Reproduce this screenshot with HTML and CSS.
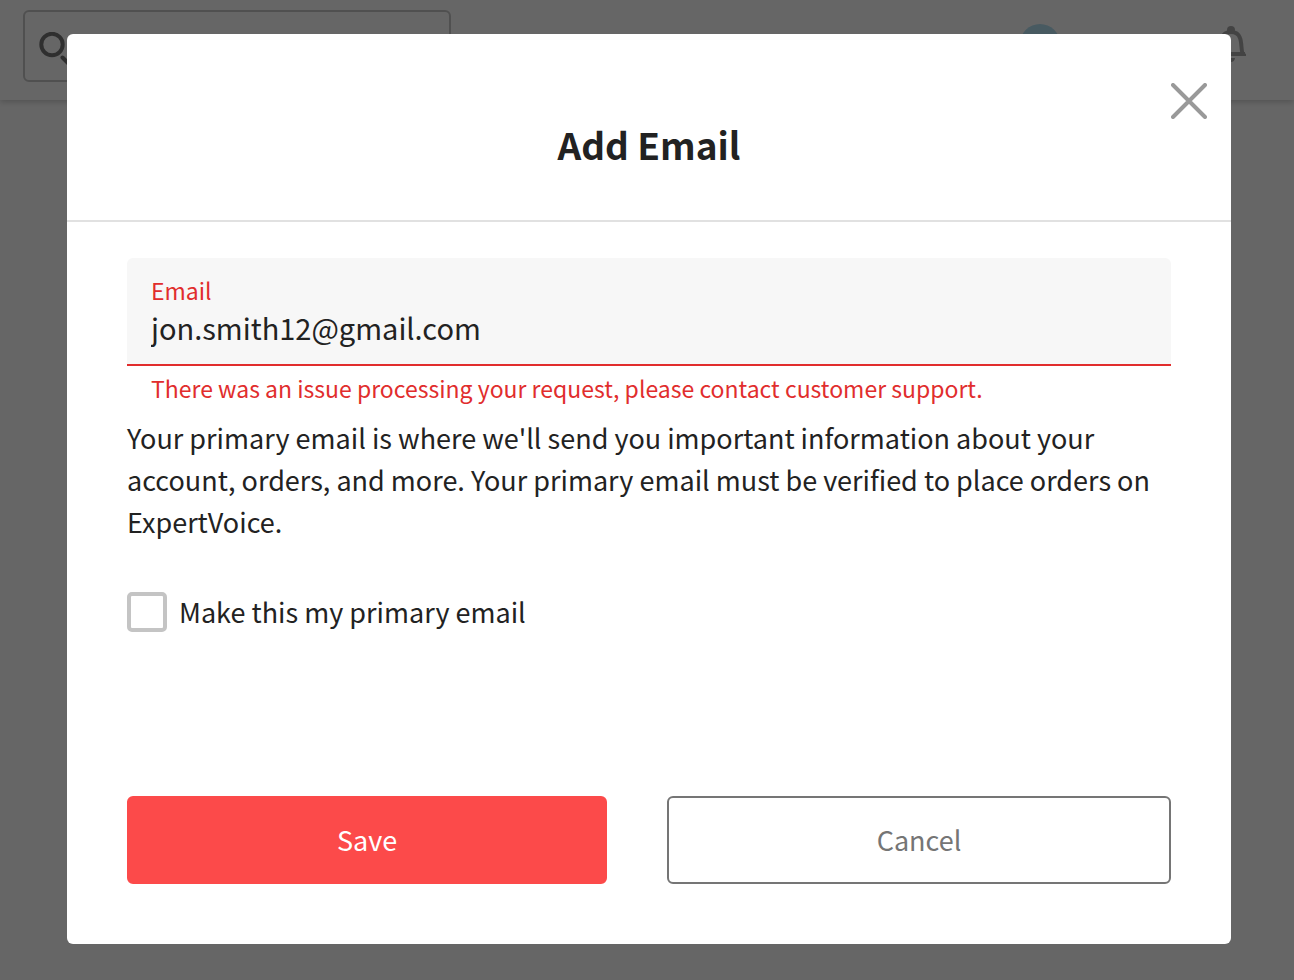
FILE: index.html
```
<!DOCTYPE html>
<html lang="en">
<head>
  <meta charset="UTF-8" />
  <meta name="viewport" content="width=device-width, initial-scale=1" />
  <title>Add Email</title>
  <link rel="stylesheet" href="styles.css">
</head>
<body>

  <!-- Page behind the modal -->
  <header class="site-header">
    <div class="search">
      <svg class="search-icon" viewBox="0 0 36 36" aria-hidden="true">
        <circle cx="13" cy="12.500" r="10.700" />
        <path d="M23.500 25.500l8 8" />
      </svg>
      <input type="search" aria-label="Search" />
    </div>
    <div class="header-actions">
      <span class="avatar"></span>
      <svg class="bell-icon" viewBox="0 0 30 38" aria-hidden="true">
        <circle class="fill" cx="15" cy="4" r="4" />
        <path d="M3 28C5 26 4 17 6 12Q8 6 15 6T24 12C26 17 25 26 27 28Z" />
        <path class="fill" d="M1 26h28v4H1zM11 32h8q-.5 4-4 4t-4-4z" />
      </svg>
    </div>
  </header>

  <div class="overlay">
    <form class="modal" role="dialog" aria-labelledby="modalTitle">
      <div class="modal-header">
        <h1 id="modalTitle">Add Email</h1>
        <button type="button" class="close" aria-label="Close">
          <svg viewBox="0 0 36 36" aria-hidden="true">
            <path d="M2 2l32 32M34 2L2 34" />
          </svg>
        </button>
      </div>

      <div class="modal-body">
        <div class="field">
          <label for="email">Email</label>
          <input type="text" id="email" value="jon.smith12@gmail.com" aria-describedby="emailError" />
        </div>
        <p class="error" id="emailError">There was an issue processing your request, please contact customer support.</p>

        <p class="info">Your primary email is where we'll send you important information about your account, orders, and more. Your primary email must be verified to place orders on ExpertVoice.</p>

        <div class="checkbox">
          <input type="checkbox" id="primary" />
          <label for="primary">Make this my primary email</label>
        </div>

        <div class="actions">
          <button type="submit" class="btn btn-primary">Save</button>
          <button type="button" class="btn btn-outline">Cancel</button>
        </div>
      </div>
    </form>
  </div>

</body>
</html>
```
FILE: styles.css
```
* {
  box-sizing: border-box;
}

body {
  margin: 0;
  min-height: 100vh;
  background: #fff;
  color: #222;
  font-family: "Noto Sans CJK SC", "Open Sans", sans-serif;
  font-size: 27px;
  line-height: 42px;
}

h1, p {
  margin: 0;
}

input, button {
  font: inherit;
  color: inherit;
}

/* Page header */
.site-header {
  display: flex;
  justify-content: space-between;
  height: 100px;
  padding: 10px 48px 10px 23px;
  background: #fff;
  box-shadow: 0 2px 6px rgba(0, 0, 0, 0.2);
}

.search {
  display: flex;
  align-items: flex-start;
  width: 428px;
  height: 72px;
  padding: 20px 14px;
  border: 2px solid #c8c8c8;
  border-radius: 6px;
}

.search input {
  flex: 1;
  min-width: 0;
  height: 28px;
  border: 0;
  background: none;
}

.search-icon {
  width: 36px;
  height: 36px;
  fill: none;
  stroke: #777;
  stroke-width: 4;
  stroke-linecap: round;
}

.header-actions {
  display: flex;
  gap: 156px;
  padding-top: 14px;
}

.avatar {
  width: 40px;
  height: 40px;
  border-radius: 50%;
  background: #b4e0f2;
}

.bell-icon {
  width: 30px;
  height: 38px;
  margin-top: 2px;
  fill: none;
  stroke: #a8a8a8;
  stroke-width: 4;
}

.bell-icon .fill {
  fill: #a8a8a8;
  stroke: none;
}

/* Modal */
.overlay {
  position: fixed;
  inset: 0;
  overflow: auto;
  padding: 34px 63px 36px 67px;
  background: rgba(0, 0, 0, 0.6);
}

.modal {
  position: relative;
  background: #fff;
  border-radius: 6px;
}

.modal-header {
  padding: 82px 60px 48px;
  border-bottom: 2px solid #e1e1e1;
  text-align: center;
}

.modal-header h1 {
  font-size: 37px;
  font-weight: bold;
  line-height: 56px;
}

.close {
  position: absolute;
  top: 49px;
  right: 24px;
  width: 36px;
  height: 36px;
  padding: 0;
  border: 0;
  background: none;
  cursor: pointer;
}

.close svg {
  display: block;
  fill: none;
  stroke: #999;
  stroke-width: 4;
  stroke-linecap: round;
}

.modal-body {
  padding: 36px 60px 60px;
}

.field {
  padding: 15px 24px 17px;
  background: #f7f7f7;
  border-bottom: 2px solid #e12d2d;
  border-radius: 6px 6px 0 0;
}

.field label {
  display: block;
  color: #e12d2d;
  font-size: 23px;
  line-height: 34px;
}

.field input {
  display: block;
  width: 100%;
  height: 40px;
  padding: 0;
  border: 0;
  outline: 0;
  background: none;
  font-size: 29px;
}

.error {
  padding: 6px 24px 13px;
  color: #e12d2d;
  font-size: 23px;
  line-height: 32px;
}

.checkbox {
  display: flex;
  align-items: center;
  gap: 12px;
  margin-top: 48px;
}

.checkbox input {
  appearance: none;
  width: 40px;
  height: 40px;
  margin: 0;
  border: 4px solid #c4c4c4;
  border-radius: 5px;
  background: #fff;
}

.checkbox input:checked {
  background: #fc4a4a;
}

.actions {
  display: grid;
  grid-template-columns: 20fr 21fr;
  gap: 60px;
  margin-top: 163px;
}

.btn {
  height: 88px;
  border: 2px solid #fc4a4a;
  border-radius: 6px;
  cursor: pointer;
}

.btn-primary {
  background: #fc4a4a;
  color: #fff;
}

.btn-outline {
  background: #fff;
  border-color: #757575;
  color: #757575;
}
```
